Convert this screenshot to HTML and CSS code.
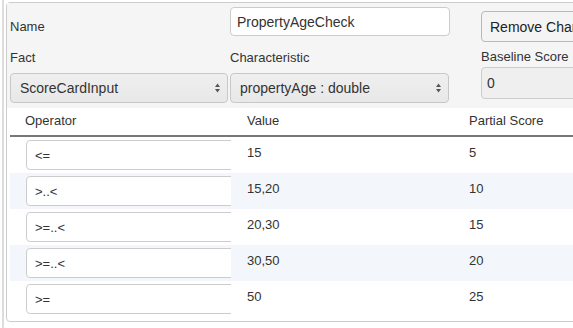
FILE: index.html
```html
<!DOCTYPE html>
<html lang="en">
<head>
    <meta charset="UTF-8">
    <meta name="viewport" content="width=device-width, initial-scale=1.0">
    <title>Characteristic</title>
    <link rel="stylesheet" href="styles.css">
</head>
<body>
    <div class="frame">
        <div class="panel">
            <!-- characteristic properties -->
            <div class="props">
                <div class="col col-fact">
                    <label class="lbl lbl-name">Name</label>
                    <label class="lbl lbl-fact">Fact</label>
                    <div class="select">
                        <span>ScoreCardInput</span>
                        <svg class="arrows" width="7" height="12" viewBox="0 0 7 12"><path d="M1 5 L3.5 1.5 L6 5 Z M1 7 L3.5 10.5 L6 7 Z" fill="#555"/></svg>
                    </div>
                </div>
                <div class="col col-char">
                    <input type="text" class="text-input name-input" value="PropertyAgeCheck">
                    <label class="lbl lbl-char">Characteristic</label>
                    <div class="select">
                        <span>propertyAge : double</span>
                        <svg class="arrows" width="7" height="12" viewBox="0 0 7 12"><path d="M1 5 L3.5 1.5 L6 5 Z M1 7 L3.5 10.5 L6 7 Z" fill="#555"/></svg>
                    </div>
                </div>
                <div class="col col-base">
                    <button class="remove-btn">Remove Characteristic</button>
                    <label class="lbl lbl-base">Baseline Score</label>
                    <input type="text" class="text-input base-input" value="0">
                </div>
            </div>

            <!-- attributes -->
            <table class="attrs">
                <colgroup>
                    <col class="c-op">
                    <col class="c-val">
                    <col>
                </colgroup>
                <thead>
                    <tr>
                        <th>Operator</th>
                        <th>Value</th>
                        <th>Partial Score</th>
                    </tr>
                </thead>
                <tbody>
                    <tr>
                        <td class="op"><div class="clip"><input type="text" class="op-input" value="&lt;="></div></td>
                        <td class="val">15</td>
                        <td class="val">5</td>
                    </tr>
                    <tr>
                        <td class="op"><div class="clip"><input type="text" class="op-input" value="&gt;..&lt;"></div></td>
                        <td class="val">15,20</td>
                        <td class="val">10</td>
                    </tr>
                    <tr>
                        <td class="op"><div class="clip"><input type="text" class="op-input" value="&gt;=..&lt;"></div></td>
                        <td class="val">20,30</td>
                        <td class="val">15</td>
                    </tr>
                    <tr>
                        <td class="op"><div class="clip"><input type="text" class="op-input" value="&gt;=..&lt;"></div></td>
                        <td class="val">30,50</td>
                        <td class="val">20</td>
                    </tr>
                    <tr>
                        <td class="op"><div class="clip"><input type="text" class="op-input" value="&gt;="></div></td>
                        <td class="val">50</td>
                        <td class="val">25</td>
                    </tr>
                </tbody>
            </table>
        </div>
    </div>
</body>
</html>
```

FILE: styles.css
```css
html, body {
    margin: 0;
    padding: 0;
    overflow: hidden;
    background: #fff;
    font-family: "Liberation Sans", Arial, sans-serif;
    color: #333;
}

.frame {
    margin-left: 2px;
    border-left: 2px solid #ddd;
    height: 100vh;
    padding: 2px 0 0 2px;
}

.panel {
    width: 640px;
    border: 1px solid #ccc;
    border-radius: 4px;
    padding: 0 3px 4px 3px;
    background: #fff;
}

/* top form */
.props {
    display: flex;
    background: #f5f5f5;
    margin: 0 -3px;
    padding: 0 3px 5px 3px;
}

.col {
    display: flex;
    flex-direction: column;
    align-items: flex-start;
}

.col-fact { width: 220px; }
.col-char { width: 220px; }
.col-base { margin-left: 31px; }

.lbl {
    display: block;
    font-size: 13px;
    line-height: 16px;
    color: #333;
}

.lbl-name { margin-top: 16px; }
.lbl-fact { margin-top: 15px; margin-bottom: 7px; }
.lbl-char { margin-top: 14px; margin-bottom: 7px; }
.lbl-base { margin-top: 7px; margin-bottom: 2px; }

.text-input {
    box-sizing: border-box;
    font-family: "Liberation Sans", Arial, sans-serif;
    font-size: 14px;
    color: #333;
    border: 1px solid #ccc;
    border-radius: 4px;
    outline: none;
}

.name-input {
    margin-top: 4px;
    width: 220px;
    height: 29px;
    padding: 0 6px;
    background: #fff;
}

.base-input {
    width: 120px;
    height: 32px;
    padding: 0 5px;
    background: #efefef;
}

.select {
    box-sizing: border-box;
    display: flex;
    align-items: center;
    justify-content: space-between;
    width: 218px;
    height: 30px;
    padding: 0 6px 0 9px;
    font-size: 14px;
    color: #333;
    background: linear-gradient(#efefef, #e8e8e8);
    border: 1px solid #c8c8c8;
    border-radius: 4px;
}

.col-char .select { width: 219px; }

.remove-btn {
    margin-top: 8px;
    height: 31px;
    padding: 0 8px;
    white-space: nowrap;
    font-family: "Liberation Sans", Arial, sans-serif;
    font-size: 14px;
    color: #222;
    background: #f4f4f4;
    border: 1px solid #b8b8b8;
    border-radius: 4px;
}

/* attributes table */
.attrs {
    width: 100%;
    table-layout: fixed;
    border-collapse: collapse;
    font-size: 13px;
    line-height: 16px;
}

.c-op { width: 221px; }
.c-val { width: 222px; }

.attrs th {
    text-align: left;
    font-weight: normal;
    color: #333;
    padding: 5px 16px 6px 16px;
    border-bottom: 2px solid #777;
}

.attrs th:first-child { padding-left: 15px; }

.attrs td {
    vertical-align: top;
}

.attrs tbody tr:nth-child(even) {
    background: #f3f6fb;
}

.attrs td.op {
    padding: 3px 0 3px 16px;
}

.clip {
    overflow: hidden;
}

.op-input {
    box-sizing: border-box;
    display: block;
    width: 240px;
    height: 30px;
    padding: 0 8px;
    font-family: "Liberation Sans", Arial, sans-serif;
    font-size: 13px;
    color: #333;
    background: #fff;
    border: 1px solid #ccc;
    border-radius: 4px;
    outline: none;
}

.attrs td.val {
    padding: 8px 16px 12px 16px;
    color: #333;
}
```
